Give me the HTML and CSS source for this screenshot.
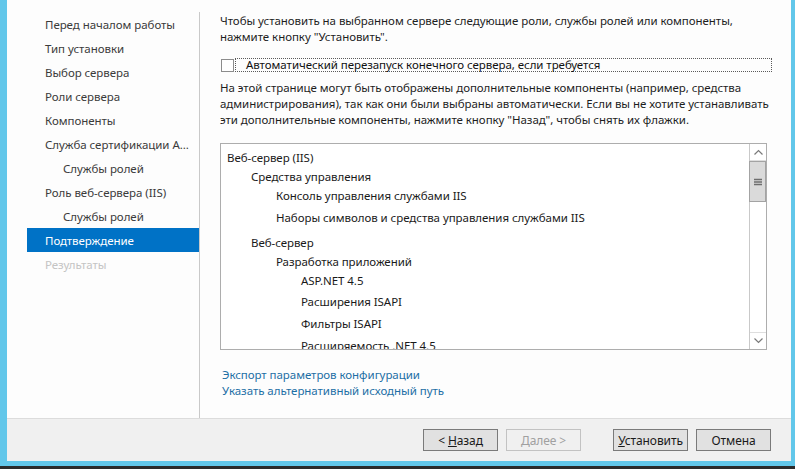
FILE: index.html
```html
<!DOCTYPE html>
<html lang="ru">
<head>
<meta charset="utf-8">
<title>Мастер добавления ролей и компонентов</title>
<link rel="stylesheet" href="styles.css">
</head>
<body>
<div class="frame">
  <div class="window">
    <div class="main">
      <nav class="nav">
        <div class="nav-item">Перед началом работы</div>
        <div class="nav-item">Тип установки</div>
        <div class="nav-item">Выбор сервера</div>
        <div class="nav-item">Роли сервера</div>
        <div class="nav-item">Компоненты</div>
        <div class="nav-item">Служба сертификации Active Directory</div>
        <div class="nav-item sub">Службы ролей</div>
        <div class="nav-item">Роль веб-сервера (IIS)</div>
        <div class="nav-item sub">Службы ролей</div>
        <div class="nav-item active">Подтверждение</div>
        <div class="nav-item disabled">Результаты</div>
      </nav>
      <div class="sep"></div>
      <section class="content">
        <p class="text">Чтобы установить на выбранном сервере следующие роли, службы ролей или компоненты,<br>нажмите кнопку "Установить".</p>
        <div class="check-row">
          <span class="checkbox"></span>
          <span class="focus">Автоматический перезапуск конечного сервера, если требуется</span>
        </div>
        <p class="text para2">На этой странице могут быть отображены дополнительные компоненты (например, средства<br>администрирования), так как они были выбраны автоматически. Если вы не хотите устанавливать<br>эти дополнительные компоненты, нажмите кнопку "Назад", чтобы снять их флажки.</p>
        <div class="listbox">
          <div class="list">
            <div class="li l0">Веб-сервер (IIS)</div>
            <div class="li l1 g3">Средства управления</div>
            <div class="li l2 g3">Консоль управления службами IIS</div>
            <div class="li l2 g6">Наборы символов и средства управления службами IIS</div>
            <div class="li l1 g9">Веб-сервер</div>
            <div class="li l2 g3">Разработка приложений</div>
            <div class="li l3 g3">ASP.NET 4.5</div>
            <div class="li l3 g5">Расширения ISAPI</div>
            <div class="li l3 g6">Фильтры ISAPI</div>
            <div class="li l3 g6">Расширяемость .NET 4.5</div>
          </div>
          <div class="scrollbar">
            <div class="sb-btn sb-up">
              <svg width="9" height="6" viewBox="0 0 9 6"><path d="M0.5 5.5 L4.5 1.5 L8.5 5.5" fill="none" stroke="#7a7a7a" stroke-width="1.2"/></svg>
            </div>
            <div class="sb-thumb">
              <svg width="8" height="8" viewBox="0 0 8 8"><path d="M0 1.5 H8 M0 4 H8 M0 6.5 H8" stroke="#6e6e6e" stroke-width="1.4"/></svg>
            </div>
            <div class="sb-track"></div>
            <div class="sb-btn sb-down">
              <svg width="9" height="6" viewBox="0 0 9 6"><path d="M0.5 0.5 L4.5 4.5 L8.5 0.5" fill="none" stroke="#7a7a7a" stroke-width="1.2"/></svg>
            </div>
          </div>
        </div>
        <div class="links">
          <a class="link" href="#">Экспорт параметров конфигурации</a>
          <a class="link" href="#">Указать альтернативный исходный путь</a>
        </div>
      </section>
    </div>
    <footer class="footer">
      <button class="btn">&lt; <u>Н</u>азад</button>
      <button class="btn" disabled><u>Д</u>алее &gt;</button>
      <button class="btn wide-gap"><u>У</u>становить</button>
      <button class="btn">Отмена</button>
    </footer>
  </div>
  <div class="taskbar-line"></div>
</div>
</body>
</html>
```
FILE: styles.css
```css
* { box-sizing: border-box; }
html, body { margin: 0; padding: 0; }
body {
  width: 795px;
  height: 469px;
  overflow: hidden;
  font-family: "Noto Sans", "Open Sans", sans-serif;
  font-size: 11.5px;
  letter-spacing: -0.05px;
  color: #1e1e1e;
  background: #62c7ea;
}
.frame {
  display: flex;
  flex-direction: column;
  height: 469px;
  padding: 0 4px 0 7px;
}
.window {
  height: 461px;
  display: flex;
  flex-direction: column;
  background: #fdfdfd;
}
.taskbar-line {
  margin: 5px -4px 0 -7px;
  height: 3px;
  background: #2b2b2b;
}
.main {
  height: 418px;
  display: flex;
}
.nav {
  width: 192px;
  padding: 12px 0 0 20px;
}
.nav-item {
  height: 24px;
  line-height: 22px;
  padding: 2px 6px 0 18px;
  color: #3b3b3b;
  white-space: nowrap;
  overflow: hidden;
  text-overflow: ellipsis;
}
.nav-item.sub { padding-left: 36px; }
.nav-item.active { background: #0072c6; color: #ffffff; }
.nav-item.disabled { color: #c4c4c4; }
.sep {
  width: 1px;
  margin-top: 12px;
  background: #c9c9c9;
}
.content {
  flex: 1;
  padding: 13px 0 0 20px;
}
.text {
  margin: 0;
  line-height: 16px;
  white-space: nowrap;
}
.check-row {
  margin-top: 13px;
  height: 14px;
  display: flex;
  align-items: center;
}
.checkbox {
  width: 13px;
  height: 13px;
  border: 1px solid #8c8c8c;
  background: #ffffff;
  margin-left: 1px;
}
.focus {
  margin-left: 1px;
  width: 537px;
  height: 14px;
  line-height: 12px;
  border: 1px dotted #5a5a5a;
  padding-left: 10px;
  color: #111;
}
.para2 { margin-top: 8px; }
.listbox {
  margin-top: 15px;
  width: 547px;
  height: 207px;
  border: 1px solid #adadad;
  background: #ffffff;
  display: flex;
}
.list {
  flex: 1;
  overflow: hidden;
  padding-top: 6px;
}
.li {
  line-height: 16px;
  height: 16px;
  white-space: nowrap;
  color: #1a1a1a;
}
.l0 { padding-left: 6px; }
.l1 { padding-left: 30px; }
.l2 { padding-left: 55px; }
.l3 { padding-left: 80px; }
.g3 { margin-top: 3px; }
.g5 { margin-top: 5px; }
.g6 { margin-top: 6px; }
.g9 { margin-top: 9px; }
.scrollbar {
  width: 17px;
  border-left: 1px solid #c9c9c9;
  display: flex;
  flex-direction: column;
  background: #ffffff;
}
.sb-btn {
  height: 17px;
  display: flex;
  align-items: center;
  justify-content: center;
}
.sb-up { border-bottom: 1px solid #dedede; }
.sb-down { border-top: 1px solid #dedede; }
.sb-thumb {
  height: 41px;
  margin: 0 0 0 -1px;
  background: #dadada;
  border: 1px solid #a3a3a3;
  display: flex;
  align-items: center;
  justify-content: center;
}
.sb-track { flex: 1; }
.links {
  margin-top: 17px;
  padding-left: 2px;
  display: flex;
  flex-direction: column;
  align-items: flex-start;
}
.link {
  line-height: 16px;
  color: #1d6fa5;
  text-decoration: none;
}
.footer {
  flex: 1;
  border-top: 1px solid #dcdcdc;
  background: #f0f0f0;
  display: flex;
  justify-content: flex-end;
  align-items: flex-start;
  padding: 10px 20px 0 0;
  gap: 8px;
}
.btn {
  width: 75px;
  height: 22px;
  padding: 0;
  border: 1px solid #7a7a7a;
  background: #e1e1e1;
  font-family: inherit;
  font-size: 12px;
  letter-spacing: -0.1px;
  color: #1a1a1a;
}
.btn:disabled {
  border-color: #c2c2c2;
  background: #f0f0f0;
  color: #a0a0a0;
}
.btn.wide-gap { margin-left: 24px; }
```
